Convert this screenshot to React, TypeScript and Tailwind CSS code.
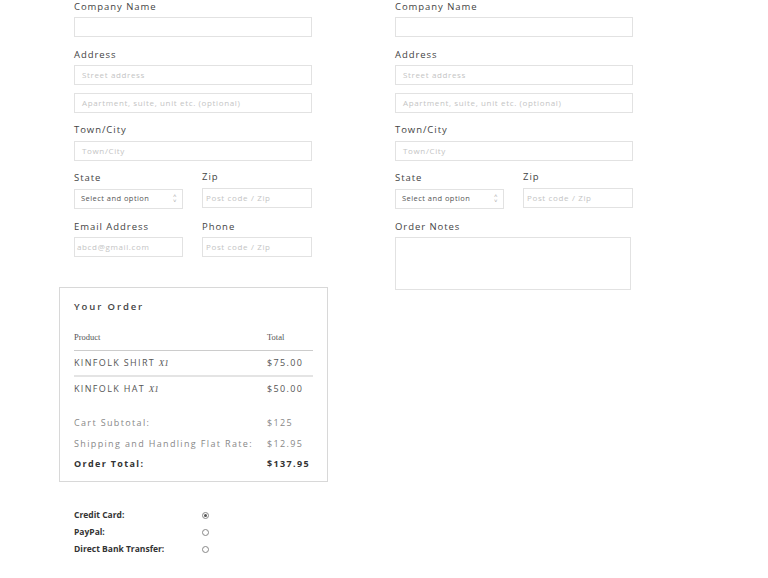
import React from "react";

const lbl = "text-[9.5px] tracking-[0.1em] text-[#444] leading-[12px]";
const inp = "border border-[#e2e2e2] h-[20px] text-[8px] tracking-[0.08em] text-[#c4c4c4] flex items-center";

function Input({ ph = "", w = "w-[238px]", pad = "px-[7px]" }: { ph?: string; w?: string; pad?: string }) {
  return <div className={`${inp} ${w} ${pad}`}>{ph}</div>;
}

function Select() {
  return (
    <div className="border border-[#e2e2e2] h-[20px] w-[109px] pl-[6px] pr-[5px] flex items-center justify-between text-[7.5px] tracking-[0.06em] text-[#555]">
      <span className="whitespace-nowrap">Select and option</span>
      <span className="flex flex-col text-[6px] leading-[5px] text-[#aaa]"><span>˄</span><span>˅</span></span>
    </div>
  );
}

function Column({ left }: { left: boolean }) {
  return (
    <div className="w-[238px] flex flex-col">
      <div className={`${lbl} mt-[1px]`}>Company Name</div>
      <div className="mt-[4px]"><Input /></div>
      <div className={`${lbl} mt-[12px]`}>Address</div>
      <div className="mt-[4px]"><Input ph="Street address" /></div>
      <div className="mt-[8px]"><Input ph="Apartment, suite, unit etc. (optional)" /></div>
      <div className={`${lbl} mt-[11px]`}>Town/City</div>
      <div className="mt-[5px]"><Input ph="Town/City" /></div>
      <div className="flex gap-[19px] mt-[11px]">
        <div>
          <div className={lbl}>State</div>
          <div className="mt-[5px]"><Select /></div>
        </div>
        <div>
          <div className={`${lbl} -mt-[1px]`}>Zip</div>
          <div className="mt-[5px]"><Input ph="Post code / Zip" w="w-[110px]" pad="px-[3px]" /></div>
        </div>
      </div>
      {left ? (
        <div className="flex gap-[19px] mt-[12px]">
          <div>
            <div className={lbl}>Email Address</div>
            <div className="mt-[4px]"><Input ph="abcd@gmail.com" w="w-[109px]" pad="px-[2px]" /></div>
          </div>
          <div>
            <div className={lbl}>Phone</div>
            <div className="mt-[4px]"><Input ph="Post code / Zip" w="w-[110px]" pad="px-[3px]" /></div>
          </div>
        </div>
      ) : (
        <div className="mt-[12px]">
          <div className={lbl}>Order Notes</div>
          <div className="mt-[4px] border border-[#e2e2e2] w-[236px] h-[53px]" />
        </div>
      )}
    </div>
  );
}

const row = "flex justify-between text-[9px] tracking-[0.15em]";

export default function App() {
  return (
    <div className="bg-white w-[768px] h-[578px] overflow-hidden" style={{ fontFamily: '"Open Sans", sans-serif' }}>
      <div className="flex gap-[83px] pl-[74px]">
        <Column left />
        <Column left={false} />
      </div>
      <div className="ml-[59px] -mt-[3px] w-[269px] h-[195px] border border-[#d8d8d8] px-[14px] pt-[12px] text-[#555]">
        <div className="text-[9.5px] font-semibold tracking-[0.2em] text-[#444]">Your Order</div>
        <div className="flex justify-between mt-[17px] pb-[6px] border-b border-[#ccc] text-[8.5px] text-[#555]" style={{ fontFamily: '"Liberation Serif", serif' }}>
          <span>Product</span><span className="w-[46px]">Total</span>
        </div>
        <div className={`${row} h-[26px] items-center border-b-2 border-[#e4e4e4]`}>
          <span>KINFOLK SHIRT <i className="tracking-normal" style={{ fontFamily: '"Liberation Serif", serif' }}>X1</i></span>
          <span className="w-[46px]">$75.00</span>
        </div>
        <div className={`${row} h-[24px] items-center`}>
          <span>KINFOLK HAT <i className="tracking-normal" style={{ fontFamily: '"Liberation Serif", serif' }}>X1</i></span>
          <span className="w-[46px]">$50.00</span>
        </div>
        <div className={`${row} mt-[15px] text-[#888]`}><span>Cart Subtotal:</span><span className="w-[46px]">$125</span></div>
        <div className={`${row} mt-[7px] text-[#888]`}><span>Shipping and Handling Flat Rate:</span><span className="w-[46px]">$12.95</span></div>
        <div className={`${row} mt-[7px] font-bold text-[#333]`}><span>Order Total:</span><span className="w-[46px]">$137.95</span></div>
      </div>
      <div className="ml-[74px] mt-[27px] flex flex-col gap-[5px] text-[8.5px] font-bold text-[#333]">
        {["Credit Card:", "PayPal:", "Direct Bank Transfer:"].map((t, i) => (
          <div key={t} className="flex items-center h-[12px]">
            <span className="w-[128px]">{t}</span>
            <span className="w-[7px] h-[7px] rounded-full border border-[#888] flex items-center justify-center">
              {i === 0 && <span className="w-[3px] h-[3px] rounded-full bg-[#555]" />}
            </span>
          </div>
        ))}
      </div>
    </div>
  );
}
